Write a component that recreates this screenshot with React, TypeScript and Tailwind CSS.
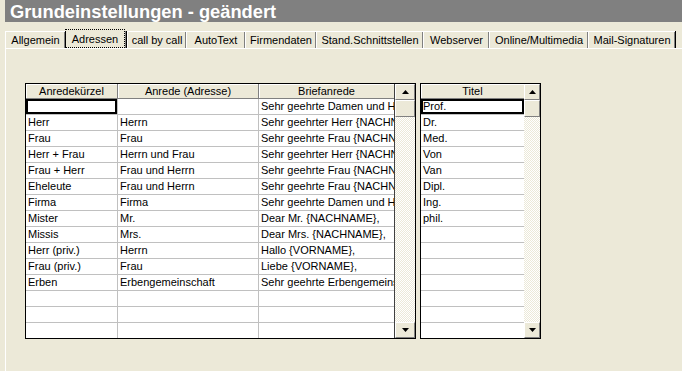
import React from 'react';

const tabs: { label: string; width: string; active?: boolean }[] = [
  { label: 'Allgemein', width: 'w-[60px]' },
  { label: 'Adressen', width: 'w-[62px]', active: true },
  { label: 'call by call', width: 'w-[59px]' },
  { label: 'AutoText', width: 'w-[59px]' },
  { label: 'Firmendaten', width: 'w-[71px]' },
  { label: 'Stand.Schnittstellen', width: 'w-[107px]' },
  { label: 'Webserver', width: 'w-[66px]' },
  { label: 'Online/Multimedia', width: 'w-[99px]' },
  { label: 'Mail-Signaturen', width: 'w-[87px]' },
];

const anreden: [string, string, string][] = [
  ['', '', 'Sehr geehrte Damen und Herren,'],
  ['Herr', 'Herrn', 'Sehr geehrter Herr {NACHNAME},'],
  ['Frau', 'Frau', 'Sehr geehrte Frau {NACHNAME},'],
  ['Herr + Frau', 'Herrn und Frau', 'Sehr geehrter Herr {NACHNAME},'],
  ['Frau + Herr', 'Frau und Herrn', 'Sehr geehrte Frau {NACHNAME},'],
  ['Eheleute', 'Frau und Herrn', 'Sehr geehrte Frau {NACHNAME},'],
  ['Firma', 'Firma', 'Sehr geehrte Damen und Herren,'],
  ['Mister', 'Mr.', 'Dear Mr. {NACHNAME},'],
  ['Missis', 'Mrs.', 'Dear Mrs. {NACHNAME},'],
  ['Herr (priv.)', 'Herrn', 'Hallo {VORNAME},'],
  ['Frau (priv.)', 'Frau', 'Liebe {VORNAME},'],
  ['Erben', 'Erbengemeinschaft', 'Sehr geehrte Erbengemeinschaft,'],
  ['', '', ''],
  ['', '', ''],
  ['', '', ''],
];

const titel = ['Prof.', 'Dr.', 'Med.', 'Von', 'Van', 'Dipl.', 'Ing.', 'phil.', '', '', '', '', '', '', ''];

function Arrow({ down }: { down?: boolean }) {
  return (
    <svg width="7" height="4" viewBox="0 0 7 4">
      <path d={down ? 'M0 0H7L3.5 4Z' : 'M0 4H7L3.5 0Z'} fill="#000" />
    </svg>
  );
}

function ScrollButton({ children, height }: { children?: React.ReactNode; height: string }) {
  return (
    <div
      className={`flex ${height} shrink-0 items-center justify-center border border-t-white border-l-white border-r-[#808080] border-b-[#808080] bg-[#ECE9D8]`}
    >
      {children}
    </div>
  );
}

function ScrollBar({ width }: { width: string }) {
  return (
    <div
      className={`flex ${width} shrink-0 flex-col bg-[image:repeating-conic-gradient(#ffffff_0%_25%,#ECE9D8_0%_50%)] bg-[length:2px_2px]`}
    >
      <ScrollButton height="h-[16px]">
        <Arrow />
      </ScrollButton>
      <ScrollButton height="h-[17px]" />
      <div className="flex-1" />
      <ScrollButton height="h-[16px]">
        <Arrow down />
      </ScrollButton>
    </div>
  );
}

function HeaderCell({ label, width, last }: { label: string; width: string; last?: boolean }) {
  return (
    <div
      className={clsxLite(
        'flex h-[15px] shrink-0 items-center justify-center border-b border-b-[#808080] bg-[#ECE9D8] shadow-[inset_1px_1px_0_#fff]',
        width,
        !last && 'border-r border-r-[#808080]'
      )}
    >
      {label}
    </div>
  );
}

function Cell({
  text,
  width,
  last,
  focused,
}: {
  text: string;
  width: string;
  last?: boolean;
  focused?: boolean;
}) {
  return (
    <div
      className={clsxLite(
        'shrink-0 overflow-hidden px-[2px] leading-[15px] whitespace-nowrap',
        width,
        !last && 'border-r border-r-[#c0c0c0]',
        focused && 'shadow-[inset_0_0_0_2px_#000]'
      )}
    >
      {text}
    </div>
  );
}

function clsxLite(...parts: (string | false | undefined)[]) {
  return parts.filter(Boolean).join(' ');
}

export default function App() {
  return (
    <div className="h-[371px] w-[682px] overflow-hidden bg-[#ECE9D8] font-['Liberation_Sans',Arial,sans-serif] text-[11px] text-black">
      {/* title */}
      <div className="ml-[5px] h-[22px] bg-[#808080] pt-px pl-[5px] text-[18.3px] leading-[22px] font-bold text-white">
        Grundeinstellungen - geändert
      </div>

      {/* tabs */}
      <div className="mt-[7px] flex h-[19px] items-end pl-[5px]">
        {tabs.map((t) =>
          t.active ? (
            <div key={t.label} className={`flex h-[19px] ${t.width} items-end`}>
              <div className="flex h-[19px] flex-1 items-center justify-center border border-dotted border-black pt-[2px]">
                {t.label}
              </div>
              <div className="h-[17px] w-[2px] border-r border-r-black bg-[#808080]" />
            </div>
          ) : (
            <div
              key={t.label}
              className={`flex h-[17px] ${t.width} items-center justify-center border-t border-l border-t-white border-l-white pt-[1px] shadow-[inset_-1px_0_0_#808080] [box-shadow:inset_-1px_0_0_#808080,1px_0_0_#000]`}
            >
              {t.label}
            </div>
          )
        )}
      </div>

      {/* panel */}
      <div className="ml-[5px] h-[330px] border-t border-l border-white pt-[34px] pl-[19px]">
        <div className="flex gap-[4px]">
          {/* Anreden grid */}
          <div className="flex h-[256px] w-[391px] overflow-hidden border border-black bg-white">
            <div className="flex w-[369px] shrink-0 flex-col border-r border-r-[#404040]">
              <div className="flex">
                <HeaderCell label="Anredekürzel" width="w-[92px]" />
                <HeaderCell label="Anrede (Adresse)" width="w-[141px]" />
                <HeaderCell label="Briefanrede" width="w-[135px]" last />
              </div>
              {anreden.map((r, i) => (
                <div key={i} className="flex h-[16px] shrink-0 border-b border-b-[#c0c0c0]">
                  <Cell text={r[0]} width="w-[92px]" focused={i === 0} />
                  <Cell text={r[1]} width="w-[141px]" />
                  <Cell text={r[2]} width="w-[135px]" last />
                </div>
              ))}
            </div>
            <ScrollBar width="w-[20px]" />
          </div>

          {/* Titel grid */}
          <div className="flex h-[256px] w-[121px] overflow-hidden border border-black bg-white">
            <div className="flex w-[103px] shrink-0 flex-col">
              <div className="flex">
                <HeaderCell label="Titel" width="w-[103px]" last />
              </div>
              {titel.map((t, i) => (
                <div key={i} className="flex h-[16px] shrink-0 border-b border-b-[#c0c0c0]">
                  <Cell text={t} width="w-[103px]" last focused={i === 0} />
                </div>
              ))}
            </div>
            <ScrollBar width="w-[16px]" />
          </div>
        </div>
      </div>
    </div>
  );
}
